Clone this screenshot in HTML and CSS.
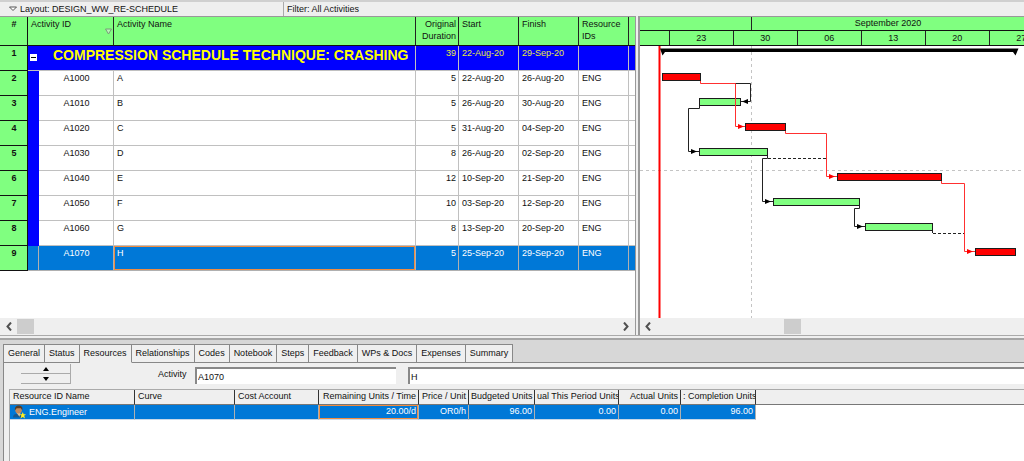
FILE: index.html
```html
<!DOCTYPE html>
<html lang="en">
<head>
<meta charset="utf-8">
<title>Activities</title>
<link rel="stylesheet" href="styles.css">
</head>
<body>
<div class="app">
  <header class="topbar">
    <button class="layout-btn" type="button"><svg width="8" height="6" viewBox="0 0 8 6"><path d="M.5 1 4 4.500 7.500 1z" fill="#fff" stroke="#555"/></svg>Layout: DESIGN_WW_RE-SCHEDULE</button>
    <span class="filter">Filter: All Activities</span>
  </header>

  <main class="split">
    <section class="pane activities">
      <div class="pane-body">
        <table class="act">
          <colgroup><col class="c-num"><col class="c-band"><col class="c-id"><col class="c-name"><col class="c-dur"><col class="c-date"><col class="c-date"><col class="c-res"><col></colgroup>
          <thead>
            <tr><th class="num">#</th><th colspan="2" class="id-head"><span class="id-label">Activity ID<svg width="7" height="7" viewBox="0 0 7 7"><path d="M.5 1h6L3.500 6z" fill="#b8f5b8" stroke="#7a9a7a"/></svg></span></th><th>Activity Name</th><th class="r">Original Duration</th><th>Start</th><th>Finish</th><th>Resource IDs</th><th></th></tr>
          </thead>
          <tbody>
            <tr class="group"><th class="num">1</th><td colspan="3" class="title"><div class="title-row"><button class="toggle" type="button" aria-label="Collapse"></button><span>COMPRESSION SCHEDULE TECHNIQUE: CRASHING</span></div></td><td class="r">39</td><td>22-Aug-20</td><td>29-Sep-20</td><td></td><td></td></tr>
            <tr><th class="num">2</th><td class="band"></td><td class="id">A1000</td><td>A</td><td class="r">5</td><td>22-Aug-20</td><td>26-Aug-20</td><td>ENG</td><td></td></tr>
            <tr><th class="num">3</th><td class="band"></td><td class="id">A1010</td><td>B</td><td class="r">5</td><td>26-Aug-20</td><td>30-Aug-20</td><td>ENG</td><td></td></tr>
            <tr><th class="num">4</th><td class="band"></td><td class="id">A1020</td><td>C</td><td class="r">5</td><td>31-Aug-20</td><td>04-Sep-20</td><td>ENG</td><td></td></tr>
            <tr><th class="num">5</th><td class="band"></td><td class="id">A1030</td><td>D</td><td class="r">8</td><td>26-Aug-20</td><td>02-Sep-20</td><td>ENG</td><td></td></tr>
            <tr><th class="num">6</th><td class="band"></td><td class="id">A1040</td><td>E</td><td class="r">12</td><td>10-Sep-20</td><td>21-Sep-20</td><td>ENG</td><td></td></tr>
            <tr><th class="num">7</th><td class="band"></td><td class="id">A1050</td><td>F</td><td class="r">10</td><td>03-Sep-20</td><td>12-Sep-20</td><td>ENG</td><td></td></tr>
            <tr><th class="num">8</th><td class="band"></td><td class="id">A1060</td><td>G</td><td class="r">8</td><td>13-Sep-20</td><td>20-Sep-20</td><td>ENG</td><td></td></tr>
            <tr class="selected"><th class="num">9</th><td class="band"></td><td class="id">A1070</td><td class="focus">H</td><td class="r">5</td><td>25-Sep-20</td><td>29-Sep-20</td><td>ENG</td><td></td></tr>
          </tbody>
        </table>
      </div>
      <div class="scroll scroll-start">
        <button type="button" aria-label="Scroll left"><svg width="6" height="9" viewBox="0 0 6 9"><path d="M5 .5 1.500 4.500 5 8.500" fill="none" stroke="#505050" stroke-width="2"/></svg></button>
        <span class="thumb"></span>
        <button class="end" type="button" aria-label="Scroll right"><svg width="6" height="9" viewBox="0 0 6 9"><path d="M1 .5 4.500 4.500 1 8.500" fill="none" stroke="#505050" stroke-width="2"/></svg></button>
      </div>
    </section>
    <div class="splitter"></div>
    <section class="pane gantt">
      <div class="months"><span class="month-prev"></span><span class="month">September 2020</span></div>
      <div class="weeks"><span class="lead"></span><span>23</span><span>30</span><span>06</span><span>13</span><span>20</span><span>27</span></div>
      <div class="pane-body">
        <svg class="chart" width="100%" height="272">
          <g fill="none" stroke="#c4c4c4" stroke-dasharray="3 3"><path d="M111.500 0V272"/><path d="M0 124.500H2000"/></g>
          <path d="M19.500 0V272" stroke="#f00" stroke-width="2"/>
          <path d="M20 2.500H378.500L375.500 9.500 373 6H25L22.500 9.500z" fill="#000"/>
          <g stroke="#1c1c1c">
            <g fill="#f00"><rect x="22.500" y="27.500" width="38" height="7"/><rect x="105.500" y="77.500" width="40" height="7"/><rect x="197.500" y="127.500" width="104" height="7"/><rect x="335.500" y="202.500" width="40" height="7"/></g>
            <g fill="#80ff80"><rect x="59.500" y="52.500" width="41" height="7"/><rect x="59.500" y="102.500" width="68" height="7"/><rect x="133.500" y="152.500" width="86" height="7"/><rect x="225.500" y="177.500" width="67" height="7"/></g>
          </g>
          <g fill="none" stroke="#222">
            <path d="M95 37.500H110.500V55.500H101"/>
            <path d="M59.500 60V62.500H48.500V105.500H59"/>
            <path d="M127.500 110V112.500H122.500V155.500H133"/>
            <path d="M219.500 160V162.500H214.500V180.500H225"/>
            <path d="M292.500 185V187"/>
            <path d="M128 112.500H186M293 187.500H324" stroke-dasharray="3 2"/>
          </g>
          <g fill="none" stroke="#ff3030">
            <path d="M60.500 35V37.500H95.500V80.500H105"/>
            <path d="M145.500 85V87.500H186.500V130.500H197"/>
            <path d="M301.500 135V137.500H324.500V205.500H335"/>
          </g>
          <path d="M102 55.500 108 53V58zM57 105.500 51 103V108zM131 155.500 125 153V158zM223 180.500 217 178V183z" fill="#000"/>
          <path d="M104 80.500 98 78V83zM195 130.500 189 128V133zM333 205.500 327 203V208z" fill="#f00"/>
        </svg>
      </div>
      <div class="scroll scroll-mid">
        <button type="button" aria-label="Scroll timeline left"><svg width="6" height="9" viewBox="0 0 6 9"><path d="M5 .5 1.500 4.500 5 8.500" fill="none" stroke="#505050" stroke-width="2"/></svg></button>
        <span class="thumb"></span>
      </div>
    </section>
  </main>

  <section class="details">
    <nav class="tabs">
      <button type="button">General</button><button type="button">Status</button><button type="button" class="active">Resources</button><button type="button">Relationships</button><button type="button">Codes</button><button type="button">Notebook</button><button type="button">Steps</button><button type="button">Feedback</button><button type="button">WPs &amp; Docs</button><button type="button">Expenses</button><button type="button">Summary</button>
    </nav>
    <div class="panel">
      <div class="form">
        <div class="spin">
          <button type="button" aria-label="Previous"><svg width="6" height="4" viewBox="0 0 6 4"><path d="M0 4 3 0 6 4z"/></svg></button>
          <button type="button" aria-label="Next"><svg width="6" height="4" viewBox="0 0 6 4"><path d="M0 0 3 4 6 0z"/></svg></button>
        </div>
        <label for="activity">Activity</label>
        <input id="activity" class="in-id" type="text" value="A1070">
        <input class="in-name" type="text" value="H" aria-label="Activity name">
      </div>
      <div class="res-wrap">
        <table class="res">
          <colgroup><col class="r-id"><col class="r-curve"><col class="r-cost"><col class="r-rem"><col class="r-price"><col class="r-bud"><col class="r-per"><col class="r-act"><col class="r-comp"><col></colgroup>
          <thead><tr><th>Resource ID Name</th><th>Curve</th><th>Cost Account</th><th class="r">Remaining Units / Time</th><th class="r">Price / Unit</th><th class="r">Budgeted Units</th><th class="r">ual This Period Units</th><th class="r">Actual Units</th><th class="r">: Completion Units</th><th class="rest"></th></tr></thead>
          <tbody><tr><td><span class="who"><svg width="13" height="14" viewBox="0 0 14 14"><path d="M0 13c0-3 2-4 5-4s6 1 6 4z" fill="#17588f"/><path d="M4 8h4l-1 4z" fill="#d9c4a0"/><circle cx="6" cy="5" r="3.500" fill="#c28a5c"/><path d="M2 5C2 1 4 0 6 0s5 1 4 5L8.500 3 4 3z" fill="#5a3c24"/><path d="m10.500 7 1 2.500H14L12 11l1 3-2.500-1.500L8 14l1-3-2-1.500h2.500z" fill="#ffee20"/></svg>ENG.Engineer</span></td><td></td><td></td><td class="r focus">20.00/d</td><td class="r">OR0/h</td><td class="r">96.00</td><td class="r">0.00</td><td class="r">0.00</td><td class="r">96.00</td><td class="rest"></td></tr></tbody>
        </table>
      </div>
    </div>
  </section>
</div>
</body>
</html>
```
FILE: styles.css
```css
* { box-sizing: border-box; }
body, button, input, table { font: 9px/13px "Liberation Sans", Arial, sans-serif; color: #111; }
body { margin: 0; background: #efefef; }
button { border: 0; padding: 0; background: none; }
svg { display: block; flex: none; }
.app { display: flex; flex-direction: column; min-height: 100vh; }

.topbar { display: flex; height: 16px; border-top: 2px solid #d0d0d0; background: #efefef; }
.layout-btn { display: flex; align-items: center; gap: 3px; flex: 0 0 284px; padding-left: 9px; border-right: 1px solid #aaa; }
.filter { padding: 1px 3px; }

.split { display: flex; height: 320px; border-bottom: 1px solid #aaa; background: #fff; overflow: hidden; }
.pane { display: flex; flex-direction: column; min-width: 0; border-top: 1px solid #999; }
.activities { flex: 0 0 62%; }
.gantt { flex: 1; }
.splitter { flex: none; width: 5px; border: solid #999; border-width: 0 2px 0 1px; background: #efefef; }
.pane-body { flex: 1; min-height: 0; overflow: hidden; }

table { border-collapse: separate; border-spacing: 0; table-layout: fixed; width: 100%; }
th { font-weight: normal; text-align: left; }
th, td { padding: 1px 2px; vertical-align: top; overflow: hidden; }
.act .r, .res .r { text-align: right; }
.c-num { width: 28px; }
.c-band { width: 11px; }
.c-id { width: 75px; }
.c-name { width: 302px; }
.c-dur { width: 43px; }
.c-date { width: 60px; }
.c-res { width: 50px; }
.act th, .act td { padding-left: 3px; }
.act thead th { height: 29px; background: #80ff80; border-right: 1px solid #222; border-bottom: 1px solid #111; line-height: 12px; }
.act td { height: 25px; border-right: 1px solid #c0c0c0; border-bottom: 1px solid #c0c0c0; }
.act th:last-child, .act td:last-child { border-right: 0; }
.act .num { background: #80ff80; border-right: 1px solid #111; border-bottom: 1px solid #111; text-align: center; font-weight: bold; }
.act .id { text-align: center; }
.act .band { background: #00f; border-color: #00f; padding: 0; }
.act .id-head { padding-right: 1px; }
.id-label { display: flex; justify-content: space-between; }
.id-label svg { margin-top: 10px; }
.group td { background: #00f; color: #e8e840; }
.act .group .title { padding: 0 2px; }
.title-row { display: flex; align-items: flex-start; gap: 16px; color: #ff0; font: bold 14px/18px "Liberation Sans", Arial, sans-serif; white-space: nowrap; }
.toggle { position: relative; width: 7px; height: 7px; flex: none; margin-top: 8px; background: #fff; }
.toggle::after { content: ""; position: absolute; left: 1px; right: 1px; top: 3px; height: 1px; background: #000; }
.selected td, .act .selected .band { background: #0078d7; color: #fff; border-color: #b0b0b0; }
td.focus { box-shadow: inset 0 0 0 1px #f08c40; }

.scroll { display: flex; align-items: center; flex: none; height: 17px; background: #efefef; }
.scroll button { display: flex; justify-content: center; align-items: center; width: 17px; height: 17px; }
.thumb { width: 17px; height: 15px; background: #cdcdcd; }
.scroll .end { margin-left: auto; }
.scroll-mid .thumb { margin-left: 33%; }

.months { display: flex; flex: none; height: 14px; background: #80ff80; border-bottom: 1px solid #111; text-align: center; }
.month-prev { flex: 0 0 112px; border-right: 1px solid #222; }
.month { flex: 1; }
.weeks { display: flex; flex: none; height: 15px; background: #80ff80; border-bottom: 1px solid #111; overflow: hidden; line-height: 14px; text-align: center; }
.weeks span { flex: 0 0 64px; border-right: 1px solid #222; }
.weeks .lead { flex-basis: 30px; }

.details { display: flex; flex-direction: column; flex: 1; margin-top: 2px; padding: 4px 0 0 3px; border-top: 2px solid #a5a5a5; background: #d7d7d7; }
.tabs { display: flex; flex: none; position: relative; z-index: 1; }
.tabs button { height: 19px; padding: 0 4px; border: solid #888; border-width: 1px 1px 1px 0; background: #efefef; white-space: nowrap; }
.tabs button:first-child { border-left-width: 1px; }
.tabs .active { border-bottom-color: #efefef; }
.panel { display: flex; flex-direction: column; flex: 1; margin-top: -1px; padding-left: 5px; border: solid #888; border-width: 1px 0 0 1px; background: #efefef; }
.form { display: flex; align-items: flex-start; padding: 1px 0 5px 12px; }
.spin { display: flex; flex-direction: column; width: 50px; margin-right: 87px; }
.spin button { display: flex; justify-content: center; align-items: center; height: 10px; border: solid #aaa; border-width: 0 1px 1px 0; }
.form label { width: 37px; padding-top: 4px; }
.form input { height: 17px; margin-top: 3px; padding: 0 1px; border: solid #888; border-width: 2px 0 0 2px; background: #fff; outline: 0; }
.form .in-id { width: 201px; margin-right: 12px; }
.form .in-name { flex: 1; min-width: 0; }
.res-wrap { flex: 1; border: solid #aaa; border-width: 1px 0 0 1px; background: #fff; }
.res th { height: 15px; padding: 0 3px; border-right: 1px solid #333; border-bottom: 1px solid #777; background: #efefef; white-space: nowrap; }
.res td { height: 15px; padding: 0 3px; border-right: 1px solid #b0b0b0; border-bottom: 1px solid #c8d8e8; background: #0078d7; color: #fff; }
.res th.r, .res td.r { padding: 0 2px; }
.res .rest { border-right: 0; }
.res td.rest { background: #fff; border-color: #fff; }
.who { display: flex; align-items: center; gap: 3px; }
.r-id { width: 125px; }
.r-curve { width: 100px; }
.r-cost { width: 84px; }
.r-rem { width: 100px; }
.r-price { width: 50px; }
.r-bud { width: 66px; }
.r-per { width: 84px; }
.r-act { width: 62px; }
.r-comp { width: 75px; }
```
